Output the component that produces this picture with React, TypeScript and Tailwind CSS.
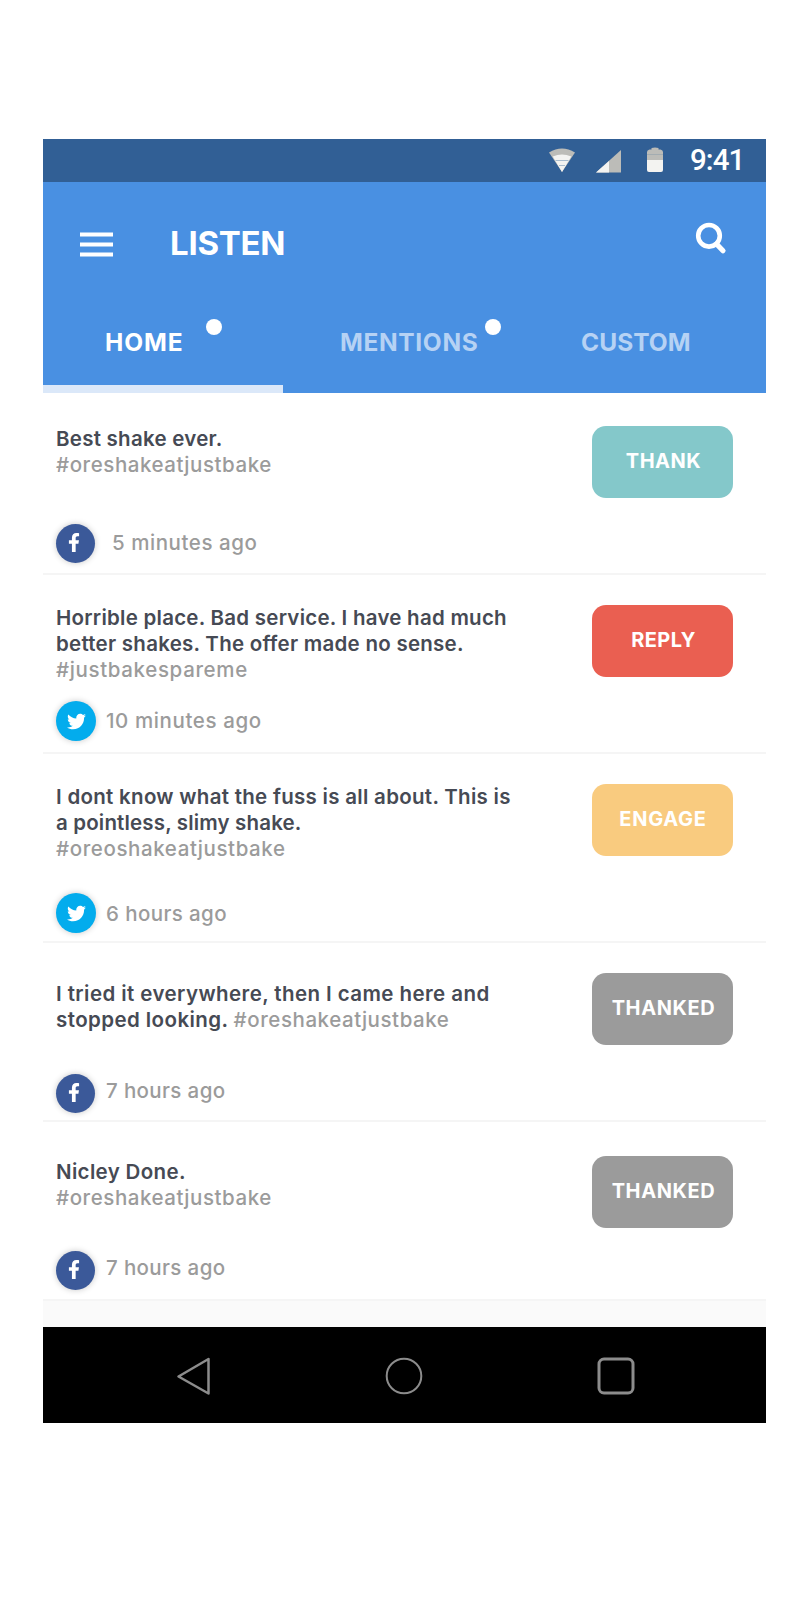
import React from "react";
import { FaFacebookF, FaTwitter } from "react-icons/fa";

type Line = { text: string; tag?: string; cls: string; tagCls?: string };
type Post = {
  row: string;
  button: string;
  label: string;
  labelCls: string;
  source: "facebook" | "twitter";
  time: string;
  timeCls: string;
  lines: Line[];
};

const DARK = "text-[#464a54] font-semibold";
const GREY = "text-[#9b9b9b] font-medium";

const posts: Post[] = [
  {
    row: "h-[182px] pt-[33px] pb-[10px]",
    button: "bg-[#84c8ca]",
    label: "THANK",
    labelCls: "tracking-[0.5px]",
    source: "facebook",
    time: "5 minutes ago",
    timeCls: "pl-[17px] pb-[1px] tracking-[0.55px]",
    lines: [
      { text: "Best shake ever.", cls: `${DARK} tracking-[0.26px]` },
      { text: "#oreshakeatjustbake", cls: `${GREY} tracking-[0.56px]` },
    ],
  },
  {
    row: "h-[179px] pt-[30px] pb-[11px]",
    button: "bg-[#ea5f51]",
    label: "REPLY",
    labelCls: "tracking-[0.45px]",
    source: "twitter",
    time: "10 minutes ago",
    timeCls: "pl-[10px] tracking-[0.6px]",
    lines: [
      { text: "Horrible place. Bad service. I have had much", cls: `${DARK} tracking-[0.25px]` },
      { text: "better shakes. The offer made no sense.", cls: `${DARK} tracking-[0.26px]` },
      { text: "#justbakespareme", cls: `${GREY} tracking-[0.64px]` },
    ],
  },
  {
    row: "h-[189px] pt-[30px] pb-[8px]",
    button: "bg-[#f9cb7f]",
    label: "ENGAGE",
    labelCls: "-ml-px tracking-[0.75px]",
    source: "twitter",
    time: "6 hours ago",
    timeCls: "pl-[10px] pt-px tracking-[0.4px]",
    lines: [
      { text: "I dont know what the fuss is all about. This is", cls: `${DARK} tracking-[0.29px]` },
      { text: "a pointless, slimy shake.", cls: `${DARK} tracking-[0.16px]` },
      { text: "#oreoshakeatjustbake", cls: `${GREY} tracking-[0.6px]` },
    ],
  },
  {
    row: "h-[179px] pt-[38px] pb-[7px]",
    button: "-mt-[8px] bg-[#9b9b9b]",
    label: "THANKED",
    labelCls: "tracking-[0.6px]",
    source: "facebook",
    time: "7 hours ago",
    timeCls: "pl-[11px] pb-[6px] tracking-[0.37px]",
    lines: [
      { text: "I tried it everywhere, then I came here and", cls: `${DARK} tracking-[0.42px]` },
      {
        text: "stopped looking. ",
        cls: `${DARK} tracking-[0.42px]`,
        tag: "#oreshakeatjustbake",
        tagCls: `${GREY} tracking-[0.56px]`,
      },
    ],
  },
  {
    row: "h-[179px] pt-[37px] pb-[9px]",
    button: "-mt-[3px] bg-[#9b9b9b]",
    label: "THANKED",
    labelCls: "tracking-[0.6px]",
    source: "facebook",
    time: "7 hours ago",
    timeCls: "pl-[11px] pb-[6px] tracking-[0.37px]",
    lines: [
      { text: "Nicley Done.", cls: `${DARK} tracking-[0.34px]` },
      { text: "#oreshakeatjustbake", cls: `${GREY} tracking-[0.56px]` },
    ],
  },
];

function SourceBadge({ source }: { source: Post["source"] }) {
  if (source === "facebook") {
    return (
      <span className="flex size-[39px] shrink-0 items-center justify-center rounded-full bg-[#3b5999] pr-[4px] pb-[2px] text-white shadow-[0_0_6px_rgba(0,0,0,0.22)]">
        <FaFacebookF className="h-[19px] w-[12px]" />
      </span>
    );
  }
  return (
    <span className="flex size-[40px] shrink-0 items-center justify-center rounded-full bg-[#03aced] text-white shadow-[0_0_6px_rgba(0,0,0,0.22)]">
      <FaTwitter className="size-[19px]" />
    </span>
  );
}

function PostRow({ post }: { post: Post }) {
  return (
    <li className={`flex items-start justify-between border-b-2 border-[#f5f5f5] bg-white pr-[33px] pl-[13px] ${post.row}`}>
      <div className="flex h-full flex-col justify-between whitespace-nowrap text-[20.5px] leading-[26px]">
        <div>
          {post.lines.map((l) => (
            <p key={l.text} className={l.cls}>
              {l.text}
              {l.tag && <span className={l.tagCls}>{l.tag}</span>}
            </p>
          ))}
        </div>
        <div className="flex items-center">
          <SourceBadge source={post.source} />
          <span className={`${GREY} ${post.timeCls}`}>{post.time}</span>
        </div>
      </div>
      <button
        className={`flex h-[72px] w-[141px] shrink-0 items-center justify-center rounded-[14px] pb-[3px] pl-[2px] text-[20px] font-bold text-white ${post.button}`}
      >
        <span className={post.labelCls}>{post.label}</span>
      </button>
    </li>
  );
}

function StatusBar() {
  return (
    <div className="flex h-[43px] items-start justify-end bg-[#315f95] pr-[24px]">
      <svg className="mt-[9px] h-[25px] w-[26px]" viewBox="0 0 26 25">
        <path d="M0 4.500Q13 -3.500 26 4.500L13 24Z" fill="#bcbcb8" />
        <path d="M3.700 8.500Q13 4.500 22.300 8.500L13 24Z" fill="#f3f3f1" />
        <path d="M6.500 12.500h13M10 17.500h6" stroke="#a9bccd" strokeWidth="1" />
      </svg>
      <svg className="mt-[10px] ml-[21px] h-[24px] w-[25px]" viewBox="0 0 25 24">
        <path d="M25 1V23.500H0Z" fill="#bcbcb8" />
        <path d="M13 12V23.500H0Z" fill="#f3f3f1" />
      </svg>
      <svg className="mt-[7px] ml-[26px] h-[27px] w-[16px]" viewBox="0 0 16 27">
        <path d="M4.500 2Q8 .8 11.500 2V3.500H13.500Q16 4 16 6V15H0V6Q0 4 2.500 3.500H4.500Z" fill="#bcbcb8" />
        <path d="M0 8.500h16" stroke="#a3acb1" strokeWidth="1" />
        <path d="M0 14h16v10q0 2-2 2H2q-2 0-2-2Z" fill="#f3f3f1" />
      </svg>
      <span className="mt-[3px] ml-[27px] w-[52px] font-[Roboto,sans-serif] text-[29.5px] leading-[36px] font-medium tracking-[-0.9px] text-white">
        9:41
      </span>
    </div>
  );
}

export default function App() {
  return (
    <div className="min-h-[1600px] w-[808px] bg-white pt-[139px] pl-[43px] font-[Inter,sans-serif]">
      <div className="w-[723px]">
        <StatusBar />
        <header className="flex h-[211px] flex-col justify-between bg-[#4990e2] text-white">
          <div className="flex items-start pt-[40px] pl-[37px]">
            <svg className="mt-[10px] h-[25px] w-[33px]" viewBox="0 0 33 25">
              <path d="M0 2.500h33M0 12.500h33M0 22.500h33" stroke="#fff" strokeWidth="4" />
            </svg>
            <h1 className="ml-[57px] text-[33px] leading-[42px] font-bold tracking-[-0.25px]">LISTEN</h1>
            <svg className="ml-auto mr-[39px] h-[33px] w-[33px]" viewBox="0 0 33 33" fill="none" stroke="#fff">
              <circle cx="15" cy="13.800" r="10.800" strokeWidth="4.600" />
              <path d="M22.500 22L29 28.700" strokeWidth="5.200" strokeLinecap="round" />
            </svg>
          </div>
          <nav className="grid grid-cols-[240px_240px_243px] text-[24.5px] leading-[30px] font-bold">
            <div className="flex h-[76px] items-start border-b-8 border-[#dbe8f9] pl-[62px]">
              <span className="mt-[10px] w-[79px] tracking-[0.95px]">HOME</span>
              <i className="mt-[2px] ml-[22px] size-4 rounded-full bg-white" />
            </div>
            <div className="flex h-[76px] items-start pl-[57px]">
              <span className="mt-[10px] w-[139px] tracking-[0.65px] text-[#b6d2f4]">MENTIONS</span>
              <i className="mt-[2px] ml-[6px] size-4 rounded-full bg-white" />
            </div>
            <div className="flex h-[76px] items-start pl-[58px]">
              <span className="mt-[10px] tracking-[0.05px] text-[#b6d2f4]">CUSTOM</span>
            </div>
          </nav>
        </header>
        <ul>
          {posts.map((p, i) => (
            <PostRow key={i} post={p} />
          ))}
        </ul>
        <div className="h-[26px] bg-[#fafafa]" />
        <div className="flex h-[96px] items-start bg-black pt-[30px] pl-[134px]">
          <svg className="h-[38px] w-[33px]" viewBox="0 0 33 38" fill="none" stroke="#8c8c8c" strokeWidth="2.500">
            <path d="M1.500 19.500L31.500 2V36.500Z" strokeLinejoin="round" />
          </svg>
          <svg className="ml-[175px] h-[38px] w-[38px]" viewBox="0 0 38 38" fill="none" stroke="#8c8c8c" strokeWidth="2">
            <circle cx="19" cy="19" r="17.300" />
          </svg>
          <svg className="ml-[174px] h-[38px] w-[38px]" viewBox="0 0 38 38" fill="none" stroke="#8c8c8c" strokeWidth="3">
            <rect x="2" y="2" width="34" height="34" rx="5" />
          </svg>
        </div>
      </div>
    </div>
  );
}
